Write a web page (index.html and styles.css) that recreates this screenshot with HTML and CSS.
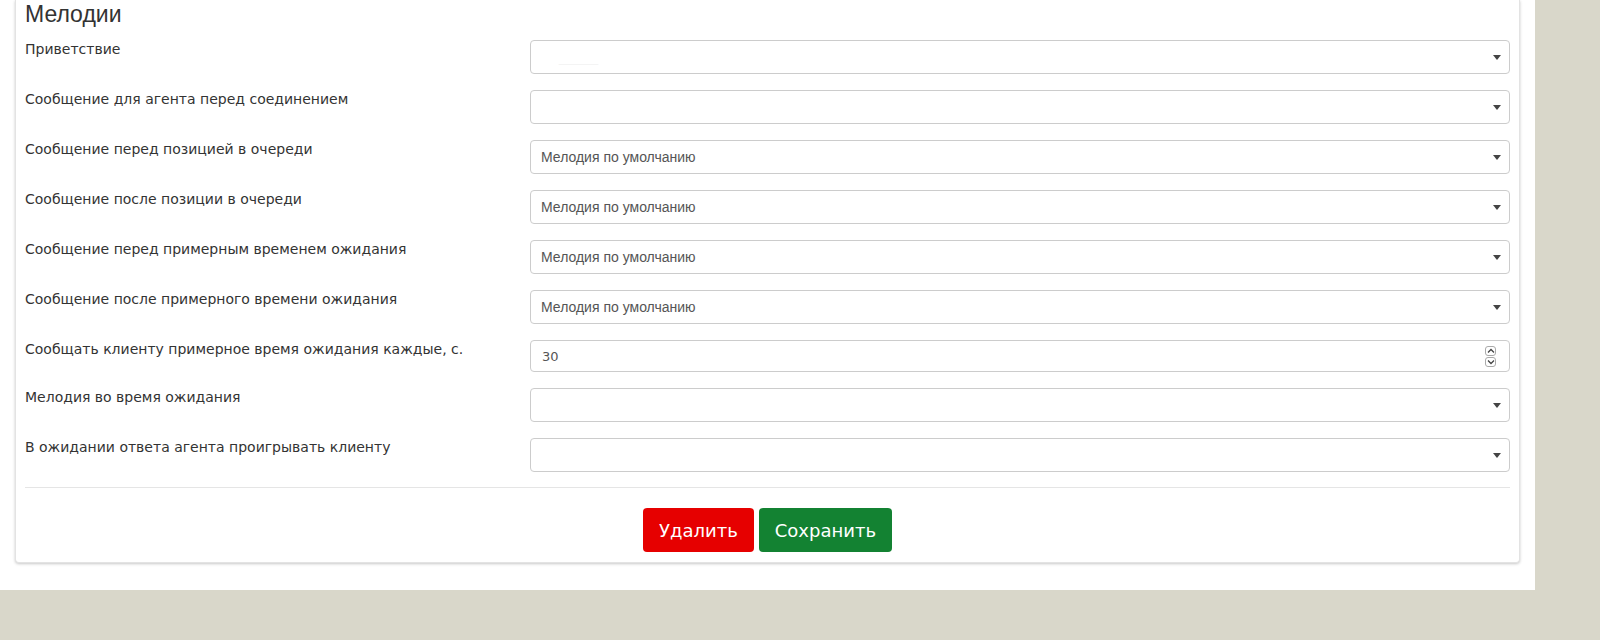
FILE: index.html
```html
<!DOCTYPE html>
<html lang="ru">
<head>
<meta charset="utf-8">
<title>Мелодии</title>
<link rel="stylesheet" href="styles.css">
</head>
<body>
<div class="page">
  <div class="card">
    <h2 class="title">Мелодии</h2>
    <div class="form">
      <div class="row">
        <label class="label">Приветствие</label>
        <div class="select"><span class="val faint">_____</span><span class="caret"></span></div>
      </div>
      <div class="row">
        <label class="label">Сообщение для агента перед соединением</label>
        <div class="select"><span class="val"></span><span class="caret"></span></div>
      </div>
      <div class="row">
        <label class="label">Сообщение перед позицией в очереди</label>
        <div class="select"><span class="val">Мелодия по умолчанию</span><span class="caret"></span></div>
      </div>
      <div class="row">
        <label class="label">Сообщение после позиции в очереди</label>
        <div class="select"><span class="val">Мелодия по умолчанию</span><span class="caret"></span></div>
      </div>
      <div class="row">
        <label class="label">Сообщение перед примерным временем ожидания</label>
        <div class="select"><span class="val">Мелодия по умолчанию</span><span class="caret"></span></div>
      </div>
      <div class="row">
        <label class="label">Сообщение после примерного времени ожидания</label>
        <div class="select"><span class="val">Мелодия по умолчанию</span><span class="caret"></span></div>
      </div>
      <div class="row">
        <label class="label">Сообщать клиенту примерное время ожидания каждые, с.</label>
        <div class="number">
          <span class="num">30</span>
          <span class="spin">
            <span class="spin-btn"><svg width="8" height="6" viewBox="0 0 8 6"><path d="M1 4.5 L4 1.5 L7 4.5" fill="none" stroke="#444" stroke-width="1.3"/></svg></span>
            <span class="spin-btn"><svg width="8" height="6" viewBox="0 0 8 6"><path d="M1 1.5 L4 4.5 L7 1.5" fill="none" stroke="#444" stroke-width="1.3"/></svg></span>
          </span>
        </div>
      </div>
      <div class="row">
        <label class="label">Мелодия во время ожидания</label>
        <div class="select"><span class="val"></span><span class="caret"></span></div>
      </div>
      <div class="row">
        <label class="label">В ожидании ответа агента проигрывать клиенту</label>
        <div class="select"><span class="val"></span><span class="caret"></span></div>
      </div>
    </div>
    <hr class="divider">
    <div class="actions">
      <button class="btn btn-delete">Удалить</button>
      <button class="btn btn-save">Сохранить</button>
    </div>
  </div>
</div>
</body>
</html>
```
FILE: styles.css
```css
html, body {
  margin: 0;
  padding: 0;
}
body {
  background: #d9d7ca;
  font-family: "DejaVu Sans", sans-serif;
  color: #333;
  height: 640px;
  overflow: hidden;
}
.page {
  width: 1535px;
  height: 590px;
  background: #fff;
  padding: 0 15px;
  box-sizing: border-box;
}
.card {
  width: 1505px;
  box-sizing: border-box;
  background: #fff;
  border: 1px solid #e3e3e3;
  border-top: none;
  border-radius: 0 0 4px 4px;
  box-shadow: 0 1px 3px rgba(0,0,0,0.22);
  padding: 2px 9px 10px 9px;
}
.title {
  margin: 0 0 13px 0;
  font-family: "Liberation Sans", Arial, sans-serif;
  font-weight: normal;
  font-size: 23px;
  line-height: 25px;
  color: #333;
}
.form {
  display: flex;
  flex-direction: column;
  gap: 16px;
}
.row {
  display: grid;
  grid-template-columns: 505px 1fr;
  align-items: start;
}
.label {
  font-size: 14px;
  line-height: 18px;
  color: #333;
}
.select {
  height: 34px;
  box-sizing: border-box;
  border: 1px solid #ccc;
  border-radius: 4px;
  display: flex;
  align-items: center;
  justify-content: space-between;
  padding: 0 8px 0 10px;
  background: #fff;
}
.val {
  font-family: "Liberation Sans", Arial, sans-serif;
  font-size: 14px;
  color: #555;
}
.val.faint {
  color: #f4f4f4;
  padding-left: 18px;
}
.caret {
  width: 0;
  height: 0;
  border-left: 4px solid transparent;
  border-right: 4px solid transparent;
  border-top: 5px solid #444;
  margin-top: 1px;
}
.number {
  position: relative;
  height: 32px;
  box-sizing: border-box;
  border: 1px solid #ccc;
  border-radius: 4px;
  display: flex;
  align-items: center;
  justify-content: space-between;
  padding: 0 13px 0 11px;
}
.num {
  font-size: 13px;
  color: #555;
}
.spin {
  display: flex;
  flex-direction: column;
  gap: 1px;
}
.spin-btn {
  width: 11px;
  height: 10px;
  box-sizing: border-box;
  border: 1px solid #aaa;
  border-radius: 3px;
  display: flex;
  align-items: center;
  justify-content: center;
  background: #fff;
}
.divider {
  border: none;
  border-top: 1px solid #e5e5e5;
  margin: 15px 0 20px 0;
}
.actions {
  display: flex;
  justify-content: center;
  gap: 5px;
}
.btn {
  font-family: "DejaVu Sans", sans-serif;
  font-size: 18px;
  color: #fff;
  border: none;
  border-radius: 4px;
  height: 44px;
  padding: 0 16px;
  cursor: pointer;
}
.btn-delete {
  background: #e60000;
}
.btn-save {
  background: #138232;
}
```
